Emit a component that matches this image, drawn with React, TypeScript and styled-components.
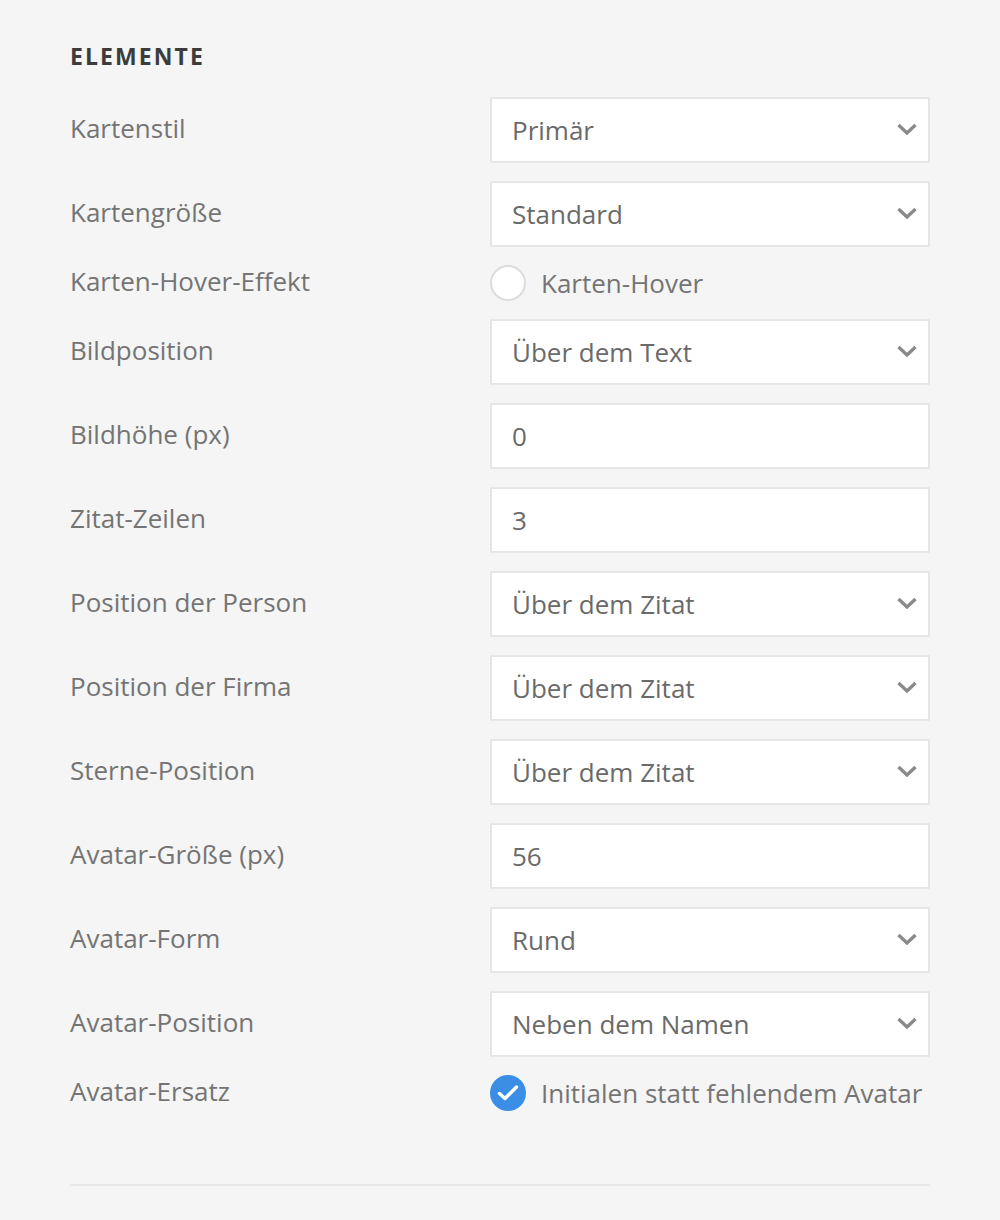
import React from "react";
import styled, { createGlobalStyle } from "styled-components";

const GlobalStyle = createGlobalStyle`
  html, body {
    margin: 0;
    padding: 0;
    background: #f5f5f5;
  }
  body {
    font-family: "Open Sans", "Liberation Sans", sans-serif;
  }
`;

const Panel = styled.section`
  width: 860px;
  padding: 42px 70px 0;
  background: #f5f5f5;
  min-height: 1220px;
  box-sizing: content-box;
`;

const Heading = styled.h3`
  margin: 0 0 27px;
  font-family: "Open Sans", "Liberation Sans", sans-serif;
  font-size: 23px;
  font-weight: 700;
  letter-spacing: 2.1px;
  line-height: 28px;
  color: #3c3c3c;
  text-transform: uppercase;
`;

const Fields = styled.div`
  display: flex;
  flex-direction: column;
  row-gap: 18px;
`;

const Row = styled.div`
  display: grid;
  grid-template-columns: 420px 440px;
  align-items: center;
`;

const Label = styled.span`
  font-size: 26px;
  line-height: 32px;
  color: #747474;
  padding-bottom: 4px;
`;

const Box = styled.div`
  position: relative;
  display: flex;
  align-items: center;
  height: 66px;
  padding: 0 20px;
  box-sizing: border-box;
  background: #fff;
  border: 2px solid #e6e6e6;
  font-size: 26px;
  color: #6a6a6a;
`;

const Chevron = styled.svg`
  position: absolute;
  right: 10px;
  top: 50%;
  width: 22px;
  height: 14px;
  margin-top: -8px;
`;

const Choice = styled.label`
  display: flex;
  align-items: center;
  column-gap: 15px;
  height: 36px;
  font-size: 26px;
  color: #747474;
`;

const Radio = styled.span`
  width: 36px;
  height: 36px;
  box-sizing: border-box;
  border-radius: 50%;
  border: 2px solid #dcdcdc;
  background: #fff;
`;

const Check = styled.span`
  display: flex;
  align-items: center;
  justify-content: center;
  width: 36px;
  height: 36px;
  border-radius: 50%;
  background: #3a8ee6;
`;

const Divider = styled.hr`
  margin: 73px 0 0;
  border: none;
  border-top: 2px solid #e8e8e8;
`;

type Field =
  | { kind: "select"; label: string; value: string }
  | { kind: "input"; label: string; value: string }
  | { kind: "radio"; label: string; value: string }
  | { kind: "check"; label: string; value: string };

const fields: Field[] = [
  { kind: "select", label: "Kartenstil", value: "Primär" },
  { kind: "select", label: "Kartengröße", value: "Standard" },
  { kind: "radio", label: "Karten-Hover-Effekt", value: "Karten-Hover" },
  { kind: "select", label: "Bildposition", value: "Über dem Text" },
  { kind: "input", label: "Bildhöhe (px)", value: "0" },
  { kind: "input", label: "Zitat-Zeilen", value: "3" },
  { kind: "select", label: "Position der Person", value: "Über dem Zitat" },
  { kind: "select", label: "Position der Firma", value: "Über dem Zitat" },
  { kind: "select", label: "Sterne-Position", value: "Über dem Zitat" },
  { kind: "input", label: "Avatar-Größe (px)", value: "56" },
  { kind: "select", label: "Avatar-Form", value: "Rund" },
  { kind: "select", label: "Avatar-Position", value: "Neben dem Namen" },
  { kind: "check", label: "Avatar-Ersatz", value: "Initialen statt fehlendem Avatar" },
];

const Control: React.FC<{ field: Field }> = ({ field }) => {
  if (field.kind === "radio") {
    return (
      <Choice>
        <Radio />
        {field.value}
      </Choice>
    );
  }
  if (field.kind === "check") {
    return (
      <Choice>
        <Check>
          <svg width="22" height="18" viewBox="0 0 22 18" fill="none">
            <path d="M2.5 9.5 L8 14.5 L19.5 3" stroke="#fff" strokeWidth="3.4" strokeLinecap="round" strokeLinejoin="round" />
          </svg>
        </Check>
        {field.value}
      </Choice>
    );
  }
  return (
    <Box>
      {field.value}
      {field.kind === "select" && (
        <Chevron viewBox="0 0 22 14" fill="none">
          <path d="M2.5 3 L11 11 L19.5 3" stroke="#8a8a8a" strokeWidth="3.4" />
        </Chevron>
      )}
    </Box>
  );
};

const App: React.FC = () => {
  return (
    <>
      <GlobalStyle />
      <Panel>
        <Heading>Elemente</Heading>
        <Fields>
          {fields.map((field) => (
            <Row key={field.label}>
              <Label>{field.label}</Label>
              <Control field={field} />
            </Row>
          ))}
        </Fields>
        <Divider />
      </Panel>
    </>
  );
};

export default App;
